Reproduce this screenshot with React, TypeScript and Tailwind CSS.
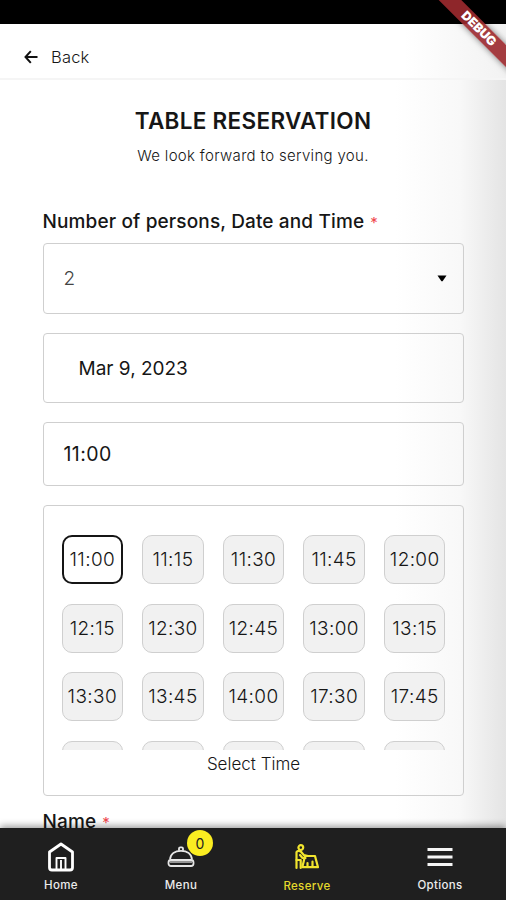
import type { ReactNode } from "react";
import clsx from "clsx";

const SLOTS = [
  "11:00", "11:15", "11:30", "11:45", "12:00",
  "12:15", "12:30", "12:45", "13:00", "13:15",
  "13:30", "13:45", "14:00", "17:30", "17:45",
];

function HomeIcon() {
  return (
    <svg width="28" height="30" viewBox="0 0 28 30" fill="none" stroke="#fff" strokeWidth="2.8" strokeLinejoin="round">
      <path d="M14 2 2.500 10v15.500A2.500 2.500 0 0 0 5 28h18a2.500 2.500 0 0 0 2.500-2.500V10L14 2Z" />
      <path d="M9.500 27V16h9v11M14 18v9" strokeWidth="1.900" />
    </svg>
  );
}

function ClocheIcon() {
  return (
    <svg width="28" height="22" viewBox="0 0 28 22" fill="none" stroke="#e6e6e6" strokeWidth="1.800" strokeLinejoin="round">
      <path d="M3 13.500C3.500 8 8 4.800 14 4.800s10.500 3.200 11 8.700" />
      <path d="M12 4.800V2.600c0-.8.5-1.300 1.300-1.300h1.400c.8 0 1.300.5 1.300 1.300v2.200" />
      <rect x="1.500" y="14" width="25" height="6" rx="2.500" />
      <path d="M3 16h22" stroke="#a3a3a3" />
    </svg>
  );
}

function ReserveIcon() {
  return (
    <svg width="24" height="26" viewBox="0 0 24 26" fill="none" stroke="#f2e52e" strokeWidth="2.200" strokeLinejoin="round" strokeLinecap="round">
      <circle cx="5.800" cy="3.600" r="2.400" />
      <path d="M1.500 24V8c1-1.500 3.300-1.500 4.500-.2l3 3.400 4 .8" />
      <path d="M1.500 16h4.200v8M5 11l2.500 3h3" />
      <path d="M10 12h10l3 11.200H7.300L10 12Z" />
      <path d="M12.500 23v-4M17.500 23v-5.500" />
    </svg>
  );
}

function MenuIcon() {
  return (
    <svg width="26" height="20" viewBox="0 0 26 20" stroke="#f5f5f5" strokeWidth="3">
      <path d="M.5 2.500h25M.5 10h25M.5 17.500h25" />
    </svg>
  );
}

function NavItem({ label, icon, active, className }: { label: string; icon: ReactNode; active?: boolean; className?: string }) {
  return (
    <div className={clsx("flex shrink-0 flex-col items-center", className)}>
      <div className="relative mt-[11px] flex h-9 items-center">{icon}</div>
      <span className={clsx("text-[11.5px] leading-[18px] font-medium tracking-[0.35px]", active ? "mt-0.5 text-[#e5d92c]" : "mt-px text-[#ececec]")}>
        {label}
      </span>
    </div>
  );
}

function Required() {
  return <span className="ml-1.5 text-[15px] font-normal text-[#f0484c]">*</span>;
}

export default function App() {
  return (
    <div className="relative flex h-[900px] w-[506px] flex-col overflow-hidden bg-white font-[Inter,sans-serif] text-[#161616]">
      <div className="h-6 shrink-0 bg-black" />

      <header className="flex h-[56px] shrink-0 items-center border-b-2 border-[#f5f5f5] bg-linear-to-r from-white from-80% to-[#f2f2f2] pt-3 pl-6">
        <svg width="14" height="14" viewBox="0 0 14 14" fill="none" stroke="#111" strokeWidth="2">
          <path d="M6.800 1.200 1.500 7l5.300 5.800M1.500 7h12" />
        </svg>
        <span className="ml-[13px] text-[16.5px] leading-6 font-light tracking-[0.2px]">Back</span>
      </header>

      <main className="min-h-0 flex-1 overflow-hidden bg-linear-to-r from-white from-78% via-[#f8f8f8] via-91% to-[#e4e4e4] px-[42.5px]">
        <h1 className="mt-[26px] text-center text-[22.5px] leading-[30px] font-semibold tracking-[0.3px]">TABLE RESERVATION</h1>
        <p className="mt-2.5 text-center text-[15px] leading-5 font-light tracking-[0.32px]">We look forward to serving you.</p>

        <h2 className="mt-10 text-[19px] leading-8 font-medium tracking-[0.14px] whitespace-nowrap">
          Number of persons, Date and Time
          <Required />
        </h2>

        <div className="mt-1 flex h-[71px] items-center justify-between rounded-[4px] border-[1.5px] border-[#cfcfcf] pr-4 pl-5">
          <span className="pt-0.5 text-[19px] font-light text-[#444]">2</span>
          <svg width="10" height="7" viewBox="0 0 10 7">
            <path d="M.5.5h9L5.600 6.200H4.400Z" fill="#000" />
          </svg>
        </div>
        <div className="mt-[19px] flex h-[70px] items-center rounded-[4px] border-[1.5px] border-[#cfcfcf] pt-[3px] pl-[35px] text-[19px]">
          Mar 9, 2023
        </div>
        <div className="mt-[19px] flex h-16 items-center rounded-[4px] border-[1.5px] border-[#cfcfcf] pt-0.5 pl-5 text-[19.5px] tracking-[0.4px]">
          11:00
        </div>

        <div className="mt-[19px] h-[291px] rounded-[4px] border-[1.5px] border-[#cfcfcf] pt-[29px] pr-[17px] pl-[18px]">
          <div className="grid h-[215px] grid-cols-5 content-start gap-x-[19px] gap-y-[19.500px] overflow-hidden">
            {SLOTS.map((time, i) => (
              <button
                key={time}
                className={clsx(
                  "flex h-[49px] items-center justify-center rounded-[10px] pt-0.5 text-[19px] font-light tracking-[0.35px]",
                  i === 0 ? "border-2 border-[#151515] bg-white" : "border-[1.5px] border-[#cfcfcf] bg-[#f1f1f1]"
                )}
              >
                {time}
              </button>
            ))}
            {/* next row peeks out above the scroll edge */}
            {[0, 1, 2, 3, 4].map((i) => (
              <div key={i} className="h-[49px] rounded-[10px] border-[1.5px] border-[#cfcfcf] bg-[#f1f1f1]" />
            ))}
          </div>
          <div className="mt-0.5 text-center text-[17px] leading-6 font-light">Select Time</div>
        </div>

        <h2 className="mt-2.5 text-[19px] leading-8 font-medium tracking-[0.14px]">
          Name
          <Required />
        </h2>
      </main>

      <nav className="relative flex h-[72px] shrink-0 bg-[#1f1f1f] shadow-[0_-2px_7px_rgba(0,0,0,0.4)]">
        <NavItem className="w-[122px]" label="Home" icon={<HomeIcon />} />
        <NavItem
          className="w-[118px]"
          label="Menu"
          icon={
            <>
              <ClocheIcon />
              <span className="absolute -top-[9px] left-5 flex size-[26px] items-center justify-center rounded-full bg-[#fbed21] text-[14px] text-[#222]">
                0
              </span>
            </>
          }
        />
        <NavItem className="w-[134px]" label="Reserve" icon={<ReserveIcon />} active />
        <NavItem className="w-[132px]" label="Options" icon={<MenuIcon />} />
      </nav>

      <div className="absolute top-[20px] left-[408px] flex h-4 w-[140px] rotate-45 items-center justify-center bg-[#9c2a2ee8] pl-0.5 text-[12.5px] font-black text-white shadow-[0_0_6px_rgba(0,0,0,0.5)]">
        DEBUG
      </div>
    </div>
  );
}
